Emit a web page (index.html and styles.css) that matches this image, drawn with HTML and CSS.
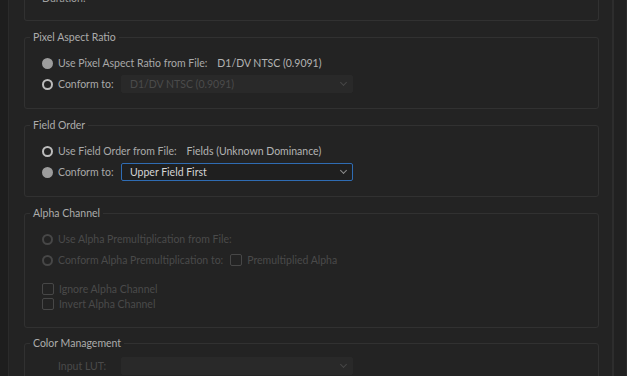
FILE: index.html
```html
<!DOCTYPE html>
<html lang="en">
<head>
  <meta charset="UTF-8">
  <title>Interpret Footage</title>
  <link rel="stylesheet" href="styles.css">
</head>
<body>
  <div class="panel">
    <div class="gutter"></div>

    <div class="content">
      <fieldset class="group group-top">
        <div class="row">
          <span class="plain">Duration:</span>
        </div>
      </fieldset>

      <fieldset class="group par">
        <legend>Pixel Aspect Ratio</legend>
        <div class="row">
          <span class="radio checked"></span>
          <span class="text from">Use Pixel Aspect Ratio from File:</span>
          <span class="value">D1/DV NTSC (0.9091)</span>
        </div>
        <div class="row">
          <span class="radio"></span>
          <span class="text label">Conform to:</span>
          <div class="select disabled">
            <span>D1/DV NTSC (0.9091)</span>
            <span class="chevron"></span>
          </div>
        </div>
      </fieldset>

      <fieldset class="group fields">
        <legend>Field Order</legend>
        <div class="row">
          <span class="radio"></span>
          <span class="text from">Use Field Order from File:</span>
          <span class="value">Fields (Unknown Dominance)</span>
        </div>
        <div class="row">
          <span class="radio checked"></span>
          <span class="text label">Conform to:</span>
          <div class="select active">
            <span>Upper Field First</span>
            <span class="chevron"></span>
          </div>
        </div>
      </fieldset>

      <fieldset class="group alpha off">
        <legend>Alpha Channel</legend>
        <div class="row">
          <span class="radio"></span>
          <span class="text">Use Alpha Premultiplication from File:</span>
        </div>
        <div class="row">
          <span class="radio"></span>
          <span class="text conform">Conform Alpha Premultiplication to:</span>
          <span class="check"></span>
          <span class="text">Premultiplied Alpha</span>
        </div>
        <div class="checks">
          <div class="row small">
            <span class="check"></span>
            <span class="text">Ignore Alpha Channel</span>
          </div>
          <div class="row small">
            <span class="check"></span>
            <span class="text">Invert Alpha Channel</span>
          </div>
        </div>
      </fieldset>

      <fieldset class="group color">
        <legend>Color Management</legend>
        <div class="row indent">
          <span class="text label dim">Input LUT:</span>
          <div class="select disabled">
            <span></span>
            <span class="chevron"></span>
          </div>
        </div>
      </fieldset>
    </div>

    <div class="scroll"></div>
  </div>
</body>
</html>
```

FILE: styles.css
```css
* {
  box-sizing: border-box;
}

body {
  margin: 0;
  background: #232323;
  font-family: Lato, 'Open Sans', sans-serif;
  font-size: 10.5px;
  color: #a9a9a9;
}

.panel {
  display: flex;
  height: 376px;
  overflow: hidden;
}

.gutter {
  width: 9px;
  flex: none;
  background: #1e1e1e;
  border-right: 1px solid #2b2b2b;
}

.content {
  flex: 1;
  padding: 0 13px 0 15px;
  min-width: 0;
}

.scroll {
  width: 15px;
  flex: none;
  border-left: 2px solid #2d2d2d;
  border-right: 1px solid #2a2a2a;
  background: #212121;
}

/* group boxes */
.group {
  border: 1px solid #313131;
  border-radius: 3px;
  margin: 0 0 9px;
  padding: 9px 17px 13px;
  min-width: 0;
}

.group legend {
  padding: 0 3px;
  margin-left: -12px;
  line-height: 14px;
  color: #acacac;
}

.group-top {
  margin-top: -12px;
  border-top: none;
  border-radius: 0 0 3px 3px;
  padding-top: 0;
  padding-bottom: 11px;
}

.group-top .plain {
  color: #a0a0a0;
}

.par {
  margin-bottom: 9px;
}

.fields {
  margin-bottom: 9px;
}

.alpha {
  padding-bottom: 16px;
  margin-bottom: 8px;
}

.color {
  padding-top: 6px;
}

/* rows */
.row {
  display: flex;
  align-items: center;
  height: 20px;
  margin-bottom: 1px;
  white-space: nowrap;
}

.row.small {
  height: 15px;
  margin-bottom: 0;
}

.row.indent {
  padding-left: 16px;
}

.checks {
  margin-top: 11px;
}

.text {
  color: #a9a9a9;
}

.text.from {
  margin-right: 10px;
}

.text.conform {
  margin-right: 7px;
}

.text.label {
  width: 63px;
}

.text.dim {
  color: #4a4a4a;
}

.value {
  color: #b3b3b3;
}

/* radios and checkboxes */
.radio {
  width: 11px;
  height: 11px;
  margin-right: 5px;
  border: 2px solid #bdbdbd;
  border-radius: 50%;
  flex: none;
}

.radio.checked {
  border-color: #9d9d9d;
  background: #9d9d9d;
}

.check {
  width: 12px;
  height: 12px;
  margin-right: 5px;
  border: 1.5px solid #474747;
  border-radius: 2px;
  flex: none;
}

.off .text {
  color: #4a4a4a;
}

.off .radio {
  border-color: #474747;
}

/* dropdowns */
.select {
  display: flex;
  align-items: center;
  justify-content: space-between;
  width: 232px;
  height: 18px;
  padding: 0 6px 0 8px;
  border: 1px solid #292929;
  border-radius: 2px;
  background: #292929;
  color: #4b4b4b;
}

.select.active {
  background: #1f1f1f;
  border-color: #2f6cb3;
  color: #d4d4d4;
}

.chevron {
  width: 5px;
  height: 5px;
  margin-bottom: 3px;
  border-right: 1px solid #8c8c8c;
  border-bottom: 1px solid #8c8c8c;
  transform: rotate(45deg);
}

.select.disabled .chevron {
  border-color: #464646;
}
```
